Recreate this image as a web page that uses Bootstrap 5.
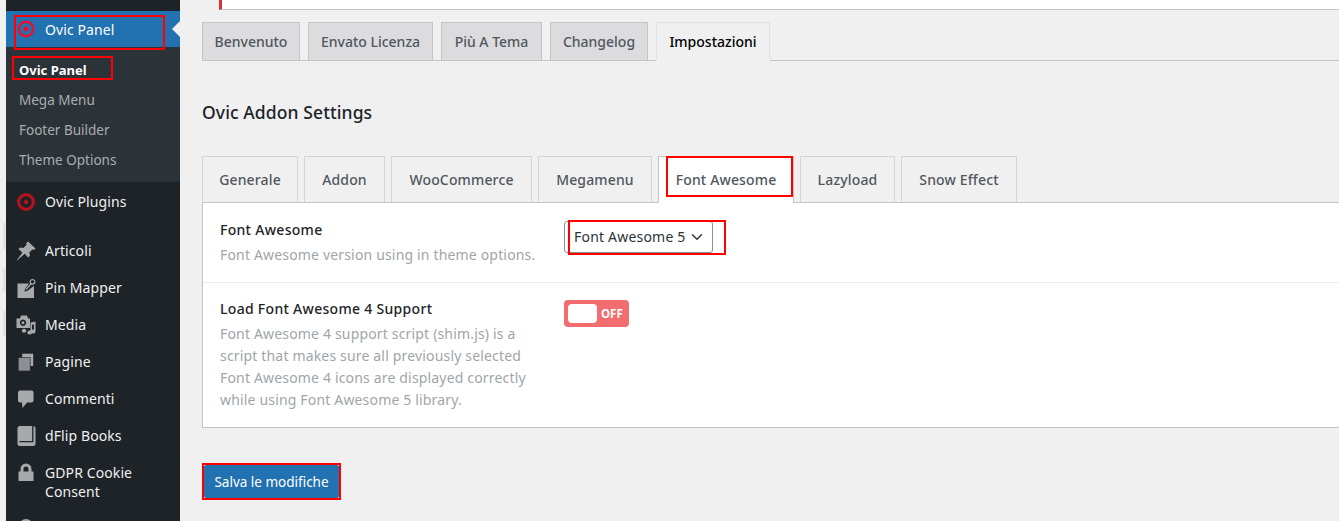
<!DOCTYPE html>
<html lang="it">
<head>
<meta charset="utf-8">
<title>Ovic Addon Settings</title>
<link href="https://cdn.jsdelivr.net/npm/bootstrap@5.3.0/dist/css/bootstrap.min.css" rel="stylesheet">
<style>
html,body{height:521px;overflow:hidden}
body{background:#f0f0f1;font-family:"Noto Sans","Open Sans",sans-serif;font-size:14px;color:#1d2327;position:relative}
.strip{width:6px;flex:none;position:relative}
.strip i{display:block;position:absolute;left:3px;width:3px;background:#e2e2e3}
.strip i:nth-child(1){top:223px;height:26px}
.strip i:nth-child(2){top:268px;height:24px}
.strip i:nth-child(3){top:311px;height:25px}
.side{width:174px;flex:none;height:521px;background:#1d2327;padding-top:11px;overflow:hidden}
.topitem{display:flex;align-items:center;color:#f0f0f1;height:37px;padding-left:9.5px;text-decoration:none;letter-spacing:.1px}
.topitem svg{width:20px;height:20px;flex:none;margin-right:9.5px;fill:#a7aaad}
.topitem.cur{background:#2271b1;color:#fff;height:36px;position:relative}
.topitem.cur::after{content:"";position:absolute;right:0;top:10px;border:8px solid transparent;border-right-color:#f0f0f1;border-left:0}
.tall{height:56px;align-items:flex-start;padding-top:9px;line-height:19px}
.tall svg{margin-top:-1px}
.lastitem{margin-top:-3px}
.subnav{background:#2c3338;height:135px;padding:8px 0 0 13px;margin-bottom:1px}
.subnav a{display:block;height:30px;line-height:30px;color:#a9adb1;font-size:13.5px;text-decoration:none}
.subnav a.now{color:#fff;font-weight:700;font-size:13px}
.bigmain{flex:1;min-width:0;padding-left:22px}
.notice{height:10px;margin-left:17px;background:#fff;border-left:3px solid #d63638;border-bottom:1px solid #c3c4c7}
.tabsA{margin-top:12px;height:39px;border-bottom:1px solid #c3c4c7;gap:8px;flex-wrap:nowrap}
.tabsA .nav-link{height:39px;margin:0;padding:0;display:flex;align-items:center;justify-content:center;background:#dcdcde;border:1px solid #c3c4c7;border-radius:0;color:#50575e;font-weight:500;font-size:14px}
.tabsA .nav-link.active{background:#f0f0f1;color:#000;border-bottom-color:#f0f0f1}
.heading{font-size:17.5px;font-weight:500;margin:41px 0 0;line-height:20px;height:20px;letter-spacing:.1px}
.tabsB{margin-top:34px;height:46px;border-bottom:0;gap:6px;flex-wrap:nowrap;padding-left:0}
.tabsB .nav-link{height:46px;margin:0;padding:0;display:flex;align-items:center;justify-content:center;background:#f0f0f1;border:1px solid #d5d5d7;border-bottom:0;border-radius:0;color:#50575e;font-weight:500;font-size:14px;letter-spacing:.15px}
.tabsB .nav-link.active{background:#fff;color:#50575e;height:47px;padding-bottom:1px;border-color:#c3c4c7;position:relative;z-index:2}
.panel{background:#fff;border:1px solid #c3c4c7;border-right:0;margin-right:-1px;height:226px}
.opt{display:flex;padding:18px 17px}
.opt + .opt{border-top:1px solid #ececed;padding-top:17px}
.optinfo{width:344px;flex:none;padding-right:24px}
.opttitle{font-weight:500;font-size:14px;line-height:18px;margin-bottom:5px;color:#1d2327;letter-spacing:.3px}
.optdesc{color:#a0a5aa;font-size:14px;line-height:22px;letter-spacing:.17px}
.fasel{width:149px;height:32px;padding:0 0 2px 9px;font-size:14px;letter-spacing:.2px;border:1px solid #8c8f94;border-radius:3px;color:#2c3338;background-color:#fff;background-position:right 9px center;background-size:12px;font-family:inherit}
.tog{width:65px;height:27px;background:#f16d6f;border-radius:4px;padding:4px;color:#fff;font-size:11.5px;font-weight:700;display:flex;align-items:center;gap:4px}
.tog span:first-child{width:29px;height:19px;background:#fff;border-radius:4px;flex:none}
.savebtn{margin:37px 0 0 2px;width:135px;height:33px;padding:1px 0 0;background:#2271b1;border:1px solid #2271b1;border-radius:2px;font-size:13.5px;color:#fff}
.redbox{position:absolute;border:2px solid #f00;pointer-events:none;z-index:5}
.rb1{left:14px;top:15px;width:151px;height:35px}
.rb2{left:12px;top:56px;width:101px;height:24px}
.rb3{left:666px;top:156px;width:127px;height:41px}
.rb4{left:568px;top:220px;width:158px;height:35px}
.rb5{left:202px;top:463px;width:139px;height:37px}
</style>
</head>
<body>
<div class="d-flex">
  <div class="strip"><i></i><i></i><i></i></div>
  <nav class="side">
    <a class="topitem cur" href="#"><svg viewBox="0 0 20 20"><circle cx="10" cy="10" r="7.2" fill="none" stroke="#e8112d" stroke-width="2.4"/><circle cx="10" cy="10" r="2.5" fill="#e8112d"/></svg>Ovic Panel</a>
    <div class="subnav">
      <a class="now" href="#">Ovic Panel</a>
      <a href="#">Mega Menu</a>
      <a href="#">Footer Builder</a>
      <a href="#">Theme Options</a>
    </div>
    <a class="topitem mb-2" href="#"><svg viewBox="0 0 20 20"><circle cx="10" cy="10" r="7.400" fill="none" stroke="#b3131f" stroke-width="3.2"/><circle cx="10" cy="10" r="2.200" fill="#b3131f"/></svg>Ovic Plugins</a>
    <div class="pt-1"></div>
    <a class="topitem" href="#"><svg viewBox="0 0 20 20"><path d="M12 .5l7.500 7-1.700 1.500-1.200-.8-3.300 3.400.6 3.200-1.700 1.600-3.500-3.600L1 19.500l-.3-.3 5.700-7.500L2.500 8l1.600-1.600 3.200.6 3.400-3.300-.8-1.200z"/></svg>Articoli</a>
    <a class="topitem" href="#"><svg viewBox="0 0 20 20"><path d="M1.500 5.500H13L9 11l-.5 2.500 3-.8 6.500-5V20H1.500z"/><path d="M10 11.500l5.200-6" stroke="#a7aaad" stroke-width="1.200" fill="none"/><circle cx="16.500" cy="3.800" r="2.300" fill="none" stroke="#a7aaad" stroke-width="1.200"/></svg>Pin Mapper</a>
    <a class="topitem" href="#"><svg viewBox="0 0 20 20"><path d="M.5 3.500H4l1-3h6l1 3h2V13H.5zM7 4.500a3.200 3.200 0 1 0 .01 0zM7 6.200a1.500 1.500 0 1 1-.01 0z" fill-rule="evenodd"/><path d="M14.500 7.500l5-1v10a2.300 2 0 1 1-1.600-1.900v-5.200l-1.900.4v7.700a2.300 2 0 1 1-1.500-1.900zM8 13.800a2.200 2 0 1 1-.01 0z"/></svg>Media</a>
    <a class="topitem" href="#"><svg viewBox="0 0 20 20"><rect x="6.200" y="1.700" width="11" height="12.300"/><rect x="2.200" y="5.500" width="12" height="13.500" fill="#8c8f94" stroke="#1d2327" stroke-width=".6"/></svg>Pagine</a>
    <a class="topitem" href="#"><svg viewBox="0 0 20 20"><path d="M4 1.500h11.500a2 2 0 0 1 2 2v8a2 2 0 0 1-2 2H11l-4.500 5.500-.5-5.500H4a2 2 0 0 1-2-2v-8a2 2 0 0 1 2-2z"/></svg>Commenti</a>
    <a class="topitem" href="#"><svg viewBox="0 0 20 20"><rect x="1.500" y="0" width="18" height="20" rx="2.500"/><path d="M3.500 15.700H16.800V0" fill="none" stroke="#1d2327" stroke-width="1.300"/></svg>dFlip Books</a>
    <a class="topitem tall" href="#"><svg viewBox="0 0 20 20"><path d="M4.500 9.500V7a5.500 5.500 0 0 1 11 0v2.500h2V19h-15V9.500zm3 0h5V7a2.500 2.500 0 0 0-5 0z" fill-rule="evenodd"/></svg><span>GDPR Cookie<br>Consent</span></a>
    <a class="topitem lastitem" href="#"><svg viewBox="0 0 20 20"><circle cx="10" cy="10" r="7"/></svg></a>
  </nav>
  <main class="bigmain">
    <div class="notice"></div>
    <ul class="nav nav-tabs tabsA">
      <li class="nav-item"><a class="nav-link" style="width:98px" href="#">Benvenuto</a></li>
      <li class="nav-item"><a class="nav-link" style="width:125px" href="#">Envato Licenza</a></li>
      <li class="nav-item"><a class="nav-link" style="width:101px" href="#">Più A Tema</a></li>
      <li class="nav-item"><a class="nav-link" style="width:98px" href="#">Changelog</a></li>
      <li class="nav-item"><a class="nav-link active" style="width:114px" href="#">Impostazioni</a></li>
    </ul>
    <h2 class="heading">Ovic Addon Settings</h2>
    <ul class="nav nav-tabs tabsB">
      <li class="nav-item"><a class="nav-link" style="width:96px" href="#">Generale</a></li>
      <li class="nav-item"><a class="nav-link" style="width:81px" href="#">Addon</a></li>
      <li class="nav-item"><a class="nav-link" style="width:141px" href="#">WooCommerce</a></li>
      <li class="nav-item"><a class="nav-link" style="width:114px" href="#">Megamenu</a></li>
      <li class="nav-item"><a class="nav-link active" style="width:136px" href="#">Font Awesome</a></li>
      <li class="nav-item"><a class="nav-link" style="width:95px" href="#">Lazyload</a></li>
      <li class="nav-item"><a class="nav-link" style="width:116px" href="#">Snow Effect</a></li>
    </ul>
    <div class="panel">
      <div class="opt" style="height:79px">
        <div class="optinfo">
          <div class="opttitle">Font Awesome</div>
          <div class="optdesc">Font Awesome version using in theme options.</div>
        </div>
        <select class="form-select fasel"><option>Font Awesome 5</option></select>
      </div>
      <div class="opt">
        <div class="optinfo">
          <div class="opttitle">Load Font Awesome 4 Support</div>
          <div class="optdesc">Font Awesome 4 support script (shim.js) is a script that makes sure all previously selected Font Awesome 4 icons are displayed correctly while using Font Awesome 5 library.</div>
        </div>
        <div class="tog"><span></span><span>OFF</span></div>
      </div>
    </div>
    <button type="button" class="btn btn-primary savebtn">Salva le modifiche</button>
  </main>
</div>
<div class="redbox rb1"></div>
<div class="redbox rb2"></div>
<div class="redbox rb3"></div>
<div class="redbox rb4"></div>
<div class="redbox rb5"></div>
<script src="https://cdn.jsdelivr.net/npm/bootstrap@5.3.0/dist/js/bootstrap.bundle.min.js"></script>
</body>
</html>
